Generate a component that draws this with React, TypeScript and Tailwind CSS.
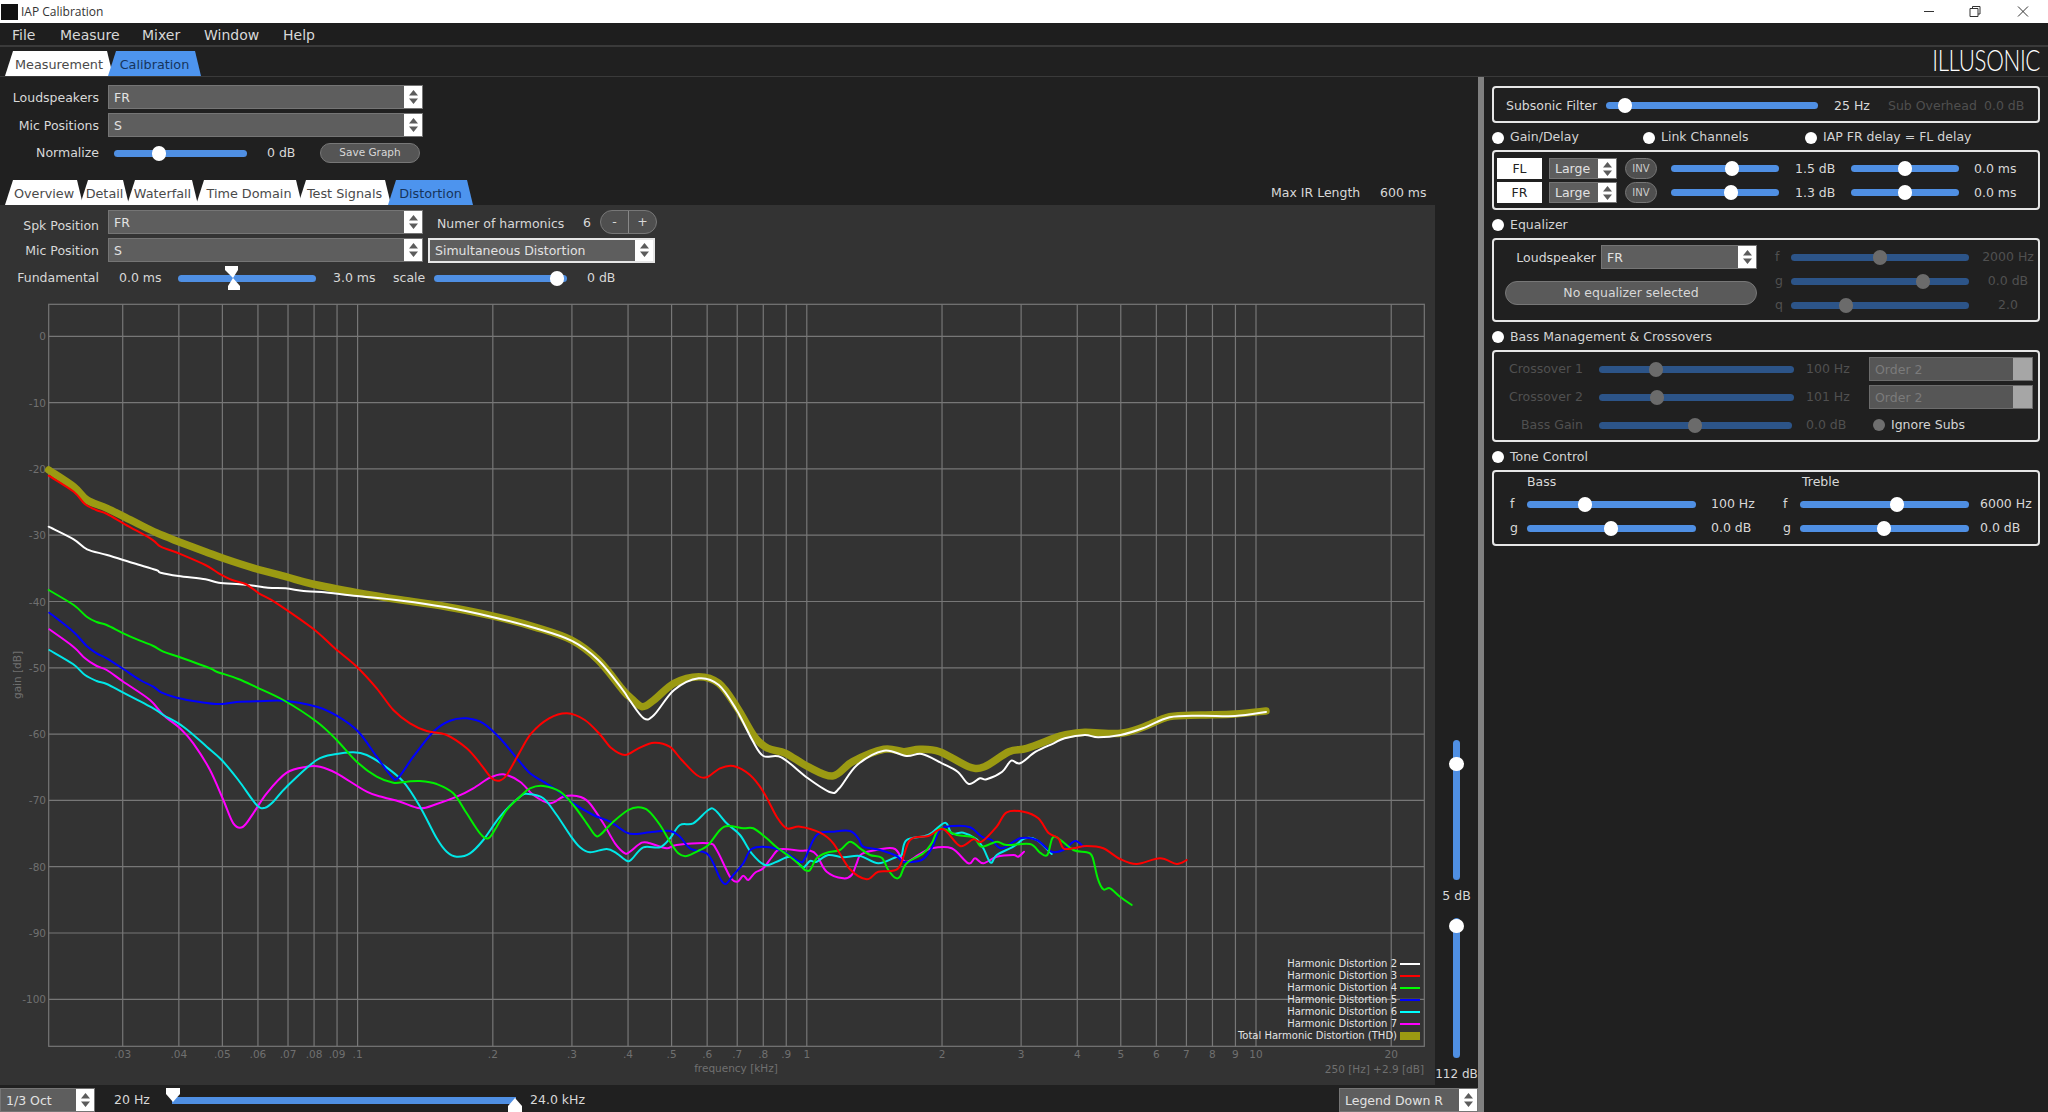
import type { ReactNode } from 'react';

type Pt = [number, number];

// traced from crops of the plot: offset + scale back to page pixels
const sec = (ox: number, oy: number, sx: number, a: number[]): Pt[] => {
  const out: Pt[] = [];
  for (let i = 0; i < a.length; i += 2) out.push([ox + a[i] / sx, oy + a[i + 1] / 3]);
  return out;
};
const z6 = (a: number[]) => sec(0, 290, 2.24, a);
const z7 = (a: number[]) => sec(500, 650, 2.24, a);
const z8 = (a: number[]) => sec(0, 600, 3, a);
const z9 = (a: number[]) => sec(500, 760, 3, a);
const z10 = (a: number[]) => sec(800, 780, 3, a);

const chain = (...parts: Pt[][]) => {
  const out: Pt[] = [];
  for (const part of parts) {
    for (const p of part) {
      if (!out.length || p[0] > out[out.length - 1][0]) out.push(p);
    }
  }
  return out;
};

const smooth = (p: Pt[]) => {
  let d = `M${p[0][0].toFixed(1)} ${p[0][1].toFixed(1)}`;
  for (let i = 0; i < p.length - 1; i++) {
    const a = p[i - 1] || p[i];
    const b = p[i];
    const c = p[i + 1];
    const e = p[i + 2] || c;
    d += `C${(b[0] + (c[0] - a[0]) / 6).toFixed(1)} ${(b[1] + (c[1] - a[1]) / 6).toFixed(1)} ${(c[0] - (e[0] - b[0]) / 6).toFixed(1)} ${(c[1] - (e[1] - b[1]) / 6).toFixed(1)} ${c[0].toFixed(1)} ${c[1].toFixed(1)}`;
  }
  return d;
};

const thd = chain(
  z6([109, 540, 165, 590, 195, 630, 240, 655, 300, 695, 350, 728, 400, 755, 460, 785, 500, 805, 570, 835, 640, 860, 700, 882, 800, 908, 900, 930, 1000, 950, 1100, 977, 1200, 1012, 1280, 1050, 1340, 1110, 1395, 1200]),
  z7([290, 140, 318, 170, 345, 150, 390, 100, 445, 80, 490, 100, 530, 170, 570, 260, 600, 295, 640, 310, 690, 350, 745, 378, 790, 335, 860, 298, 905, 305, 940, 298, 985, 305, 1050, 350, 1085, 350, 1140, 305, 1180, 295, 1240, 265, 1265, 255, 1310, 247, 1390, 250, 1440, 232, 1500, 200, 1568, 195]),
  [[1235, 714], [1266, 711]],
);
const h2 = chain(
  z6([109, 710, 165, 748, 195, 778, 240, 795, 300, 820, 350, 840, 360, 848, 400, 858, 460, 868, 490, 878, 550, 884, 600, 893, 640, 895, 680, 903, 720, 906, 800, 918, 900, 932, 1000, 952, 1100, 980, 1200, 1015, 1280, 1052, 1340, 1110, 1395, 1200]),
  z7([290, 150, 322, 205, 345, 195, 390, 120, 445, 85, 490, 105, 530, 180, 565, 270, 590, 318, 630, 322, 690, 385, 740, 427, 760, 415, 800, 345, 860, 302, 910, 318, 945, 312, 990, 340, 1025, 365, 1050, 402, 1075, 385, 1090, 388, 1125, 365, 1145, 332, 1165, 340, 1200, 305, 1240, 280, 1265, 265, 1310, 255, 1340, 262, 1390, 255, 1440, 235, 1500, 202, 1568, 197]),
  [[1235, 716], [1266, 712]],
);
const h3 = chain(
  z6([109, 557, 165, 605, 190, 642, 215, 660, 240, 672, 280, 703, 340, 748, 360, 770, 400, 790, 460, 825, 490, 850, 520, 870, 550, 882, 580, 910, 620, 940, 700, 1015, 750, 1075]),
  z8([1070, 200, 1130, 265, 1180, 330, 1230, 370, 1280, 393, 1340, 405, 1400, 445, 1440, 490, 1475, 535, 1498, 542, 1520, 525, 1560, 455]),
  z7([70, 250, 110, 205, 150, 190, 190, 210, 225, 255, 250, 295, 280, 315, 310, 295, 345, 278, 380, 290]),
  z9([545, 0, 590, 45, 620, 52, 660, 25, 700, 18, 750, 45, 790, 95, 830, 170, 860, 205]),
  z10([0, 140, 60, 158, 100, 190, 150, 268, 200, 298, 235, 275, 295, 265, 330, 180, 385, 168, 430, 148, 480, 198, 520, 178, 545, 185, 590, 140, 620, 97, 670, 95, 715, 115, 745, 158, 775, 175, 790, 205, 820, 205, 860, 198, 910, 205, 960, 237, 1010, 252, 1080, 235, 1130, 252, 1160, 240]),
);
const h4 = chain(
  z6([109, 900, 165, 945]),
  z8([260, 50, 290, 66, 320, 75, 370, 100, 420, 122, 460, 138, 490, 155, 540, 172, 630, 205, 650, 215, 715, 237, 770, 262, 850, 300, 950, 365, 1010, 420, 1070, 485, 1130, 530, 1180, 548, 1220, 545, 1260, 543, 1310, 552, 1360, 580, 1400, 640, 1440, 700, 1465, 715, 1490, 680, 1520, 630, 1560, 590]),
  z9([40, 125, 90, 85, 130, 78, 180, 95, 220, 135, 260, 190, 285, 225, 300, 225, 340, 185, 385, 150, 415, 142, 445, 152, 480, 195, 510, 245, 535, 280, 560, 288, 600, 270, 625, 255, 660, 210, 685, 198, 730, 205, 760, 205, 800, 235, 830, 262, 870, 290]),
  z10([0, 255, 15, 270, 30, 270, 50, 235, 80, 218, 120, 210, 150, 185, 180, 205, 210, 225, 245, 233, 265, 270, 285, 293, 300, 290, 320, 250, 370, 220, 395, 190, 420, 145, 470, 165, 520, 172, 545, 200, 590, 185, 620, 195, 690, 192, 720, 218, 742, 225, 757, 175, 775, 175, 820, 210, 860, 217, 877, 230, 893, 295, 910, 328, 930, 325, 960, 350, 995, 375]),
);
const h5 = chain(
  z8([148, 38, 220, 95, 260, 138, 290, 160, 320, 175, 370, 207, 420, 240, 460, 260, 485, 278, 530, 293, 600, 306, 660, 312, 720, 305, 770, 304, 850, 302, 950, 320, 1010, 347, 1075, 395, 1130, 470, 1175, 530, 1195, 533, 1240, 470, 1300, 395, 1350, 362, 1400, 355, 1450, 370, 1500, 415]),
  z9([55, 0, 90, 40, 130, 65, 170, 90, 220, 130, 280, 165, 330, 185, 380, 218, 410, 222, 450, 217, 510, 213, 540, 230, 570, 265, 620, 280, 640, 310, 660, 355, 677, 372, 700, 345, 730, 310, 755, 267, 810, 262, 860, 280]),
  z10([0, 245, 15, 235, 50, 165, 100, 155, 150, 153, 175, 175, 190, 200, 240, 210, 290, 228, 310, 245, 365, 240, 395, 205, 420, 150, 460, 138, 510, 142, 545, 170, 575, 180, 605, 205, 660, 175, 710, 180, 755, 215, 790, 210, 825, 183, 850, 200]),
);
const h6 = chain(
  z8([148, 150, 220, 193, 255, 225, 290, 243, 320, 252, 370, 278, 460, 325, 490, 345, 550, 380, 620, 440, 665, 480, 715, 540, 770, 615, 795, 623, 820, 605, 860, 560, 950, 480, 1010, 462, 1060, 457, 1100, 465, 1150, 495, 1210, 545, 1260, 620, 1310, 715, 1340, 755, 1370, 770, 1410, 760, 1450, 720, 1500, 650, 1560, 590]),
  z9([40, 120, 85, 102, 130, 115, 170, 165, 210, 225, 240, 262, 270, 277, 320, 267, 350, 280, 380, 302, 395, 298, 430, 262, 480, 262, 510, 235, 540, 195, 580, 190, 625, 150, 645, 150, 680, 190, 720, 225, 755, 280, 795, 315, 830, 305, 870, 290]),
  z10([0, 255, 12, 262, 30, 243, 50, 245, 85, 225, 130, 232, 180, 228, 235, 250, 290, 230, 305, 225, 320, 180, 385, 165, 435, 128, 455, 160, 490, 158, 530, 178, 550, 205, 572, 248, 590, 225, 640, 200, 675, 175, 710, 180, 755, 222]),
);
const h7 = chain(
  z8([148, 88, 220, 140, 255, 175, 290, 198, 320, 210, 370, 245, 450, 300, 490, 345, 540, 385, 580, 430, 630, 510, 670, 600, 700, 670, 728, 681, 760, 640, 800, 580, 860, 518, 920, 500, 960, 500, 1010, 520, 1100, 575, 1150, 592, 1200, 605, 1260, 625, 1310, 612, 1370, 590, 1420, 565, 1470, 533, 1510, 523, 1560, 545]),
  z9([60, 62, 100, 105, 150, 130, 190, 110, 230, 108, 265, 125, 310, 190, 345, 250, 375, 280, 390, 275, 425, 248, 450, 250, 500, 265, 530, 255, 625, 250, 650, 270, 690, 350, 712, 365, 730, 347, 745, 360, 765, 338, 790, 325, 815, 292, 840, 268]),
  z10([0, 212, 30, 212, 50, 225, 80, 275, 130, 295, 155, 285, 170, 250, 185, 222, 240, 208, 285, 207, 315, 245, 355, 225, 395, 205, 455, 205, 505, 250, 525, 235, 550, 250, 590, 230, 640, 225, 655, 230, 672, 215]),
);

const fx = (f: number) => 357.6 + 449.2 * Math.log10(f / 0.1);
const freqs: [number, string][] = [
  [0.03, '.03'], [0.04, '.04'], [0.05, '.05'], [0.06, '.06'], [0.07, '.07'], [0.08, '.08'], [0.09, '.09'], [0.1, '.1'],
  [0.2, '.2'], [0.3, '.3'], [0.4, '.4'], [0.5, '.5'], [0.6, '.6'], [0.7, '.7'], [0.8, '.8'], [0.9, '.9'], [1, '1'],
  [2, '2'], [3, '3'], [4, '4'], [5, '5'], [6, '6'], [7, '7'], [8, '8'], [9, '9'], [10, '10'], [20, '20'],
];
const gains = [0, -10, -20, -30, -40, -50, -60, -70, -80, -90, -100];
const gy = (g: number) => 336.3 - g * 6.63;

const legend: [string, string][] = [
  ['Harmonic Distortion 2', '#ffffff'],
  ['Harmonic Distortion 3', '#ff0000'],
  ['Harmonic Distortion 4', '#00ff00'],
  ['Harmonic Distortion 5', '#0000ff'],
  ['Harmonic Distortion 6', '#00ffff'],
  ['Harmonic Distortion 7', '#ff00ff'],
];

function Plot() {
  return (
    <svg width="1435" height="790" viewBox="0 295 1435 790" fontFamily="'DejaVu Sans', sans-serif" className="block">
      <g stroke="#777777" strokeWidth="1.2" fill="none">
        <rect x="48.7" y="304.3" width="1375.6" height="742" />
        {freqs.map(([f]) => (
          <line key={f} x1={fx(f)} x2={fx(f)} y1="304.3" y2="1046.3" />
        ))}
        {gains.map((g) => (
          <line key={g} x1="48.7" x2="1424.3" y1={gy(g)} y2={gy(g)} />
        ))}
      </g>
      <g fill="#707070" fontSize="10.5" textAnchor="middle">
        {freqs.map(([f, l]) => (
          <text key={l} x={fx(f)} y="1058">{l}</text>
        ))}
        <text x="736" y="1072">frequency [kHz]</text>
      </g>
      <g fill="#707070" fontSize="10.5" textAnchor="end">
        {gains.map((g) => (
          <text key={g} x="46" y={gy(g) + 4}>{g}</text>
        ))}
        <text x="1424" y="1073">250 [Hz]  +2.9 [dB]</text>
      </g>
      <text x="0" y="0" fill="#707070" fontSize="10.5" textAnchor="middle" transform="translate(21 675) rotate(-90)">gain [dB]</text>
      <g fill="none" strokeLinejoin="round" strokeLinecap="round">
        <path d={smooth(thd)} stroke="#9b9a12" strokeWidth="7.5" />
        <path d={smooth(h2)} stroke="#ffffff" strokeWidth="2" />
        <path d={smooth(h7)} stroke="#ff00ff" strokeWidth="2" />
        <path d={smooth(h6)} stroke="#00e8e8" strokeWidth="2" />
        <path d={smooth(h5)} stroke="#0000ff" strokeWidth="2" />
        <path d={smooth(h4)} stroke="#00f000" strokeWidth="2" />
        <path d={smooth(h3)} stroke="#ff0000" strokeWidth="2" />
      </g>
      <g fontSize="10" textAnchor="end" fill="#e4e4e4">
        {legend.map(([l, c], i) => (
          <g key={l}>
            <text x="1397" y={967 + i * 12}>{l}</text>
            <line x1="1400" x2="1420" y1={964 + i * 12} y2={964 + i * 12} stroke={c} strokeWidth="2" />
          </g>
        ))}
        <text x="1397" y="1039">Total Harmonic Distortion (THD)</text>
        <rect x="1400" y="1032" width="20" height="8" fill="#9b9a12" />
      </g>
    </svg>
  );
}

function Slider({ w, pos, off }: { w: string; pos?: number; off?: boolean }) {
  return (
    <div className={`relative h-[7px] rounded-full ${off ? 'bg-[#2c5488]' : 'bg-[#4f8fe3]'} ${w}`}>
      {pos !== undefined && (
        <div
          className={`absolute top-[-4px] h-[15px] w-[14px] rounded-full ${off ? 'bg-[#6b6b6b]' : 'bg-white'}`}
          style={{ left: pos - 7 }}
        />
      )}
    </div>
  );
}

function VSlider({ pos }: { pos: number }) {
  return (
    <div className="relative h-[140px] w-[7px] rounded-full bg-[#4f8fe3]">
      <div className="absolute left-[-4px] h-[14px] w-[15px] rounded-full bg-white" style={{ top: pos - 7 }} />
    </div>
  );
}

function Arrows() {
  return (
    <svg width="9" height="14" viewBox="0 0 9 14">
      <path d="M4.5 0 9 5.5H0zM4.5 14 0 8.5H9z" fill="#5c5c5c" />
    </svg>
  );
}

function Select({ w, h = 'h-[24px]', text, cls = '' }: { w: string; h?: string; text: string; cls?: string }) {
  return (
    <div className={`flex shrink-0 border border-[#757575] bg-[#5e5e5e] ${w} ${h} ${cls}`}>
      <div className="flex flex-1 items-center overflow-hidden whitespace-nowrap pl-[5px] pt-[2px] text-[#e2e2e2]">{text}</div>
      <div className="flex w-[18px] items-center justify-center bg-white">
        <Arrows />
      </div>
    </div>
  );
}

function OffSelect({ text }: { text: string }) {
  return (
    <div className="flex h-[24px] w-[164px] border border-[#6c6c6c] bg-[#565656]">
      <div className="flex flex-1 items-center pl-[5px] pt-[2px] text-[#7b7b7b]">{text}</div>
      <div className="w-[19px] bg-[#a6a6a6]" />
    </div>
  );
}

function Tab({ w, label, on, cls = '' }: { w: string; label: string; on?: boolean; cls?: string }) {
  return (
    <div
      className={`flex h-[25px] items-center justify-center whitespace-nowrap pt-[3px] text-[12.8px] [clip-path:polygon(8px_0,calc(100%-6px)_0,100%_100%,0_100%)] ${on ? 'bg-[#4d94ee] text-[#16345c]' : 'bg-white text-[#4a4a4a]'} ${w} ${cls}`}
    >
      {label}
    </div>
  );
}

function Radio({ label, w, off }: { label: string; w?: string; off?: boolean }) {
  return (
    <div className={`flex items-center ${w ?? ''}`}>
      <div className={`h-[12px] w-[12px] rounded-full ${off ? 'bg-[#6f6f6f]' : 'bg-white'}`} />
      <span className="ml-[6px] whitespace-nowrap text-[#d4d4d4]">{label}</span>
    </div>
  );
}

function Box({ h, children, cls = '' }: { h: string; children: ReactNode; cls?: string }) {
  return <div className={`rounded-[4px] border-2 border-[#e6e6e6] ${h} ${cls}`}>{children}</div>;
}

function GainRow({ ch, gain, pos }: { ch: string; gain: string; pos: number }) {
  return (
    <div className="flex h-[21px] items-center">
      <div className="flex h-[21px] w-[45px] items-center justify-center bg-white pt-[2px] text-[#222]">{ch}</div>
      <Select w="ml-[7px] w-[68px]" h="h-[21px]" text="Large" />
      <div className="ml-[8px] flex h-[21px] w-[32px] items-center justify-center rounded-full border border-[#777] bg-[#4f4f4f] text-[10px] text-[#ccc]">INV</div>
      <div className="ml-[14px]"><Slider w="w-[108px]" pos={pos} /></div>
      <div className="ml-[16px] w-[40px] whitespace-nowrap pt-[2px]">{gain}</div>
      <div className="ml-[16px]"><Slider w="w-[108px]" pos={54} /></div>
      <div className="ml-[15px] whitespace-nowrap pt-[2px]">0.0 ms</div>
    </div>
  );
}

function EqRow({ l, pos, v }: { l: string; pos: number; v: string }) {
  return (
    <div className="flex h-[24px] items-center text-[#505050]">
      <div className="w-[18px] pl-[2px]">{l}</div>
      <Slider w="w-[178px]" pos={pos} off />
      <div className="ml-[9px] w-[60px] text-center whitespace-nowrap">{v}</div>
    </div>
  );
}

function XoverRow({ l, pos, v, w, children }: { l: string; pos: number; v: string; w: string; children: ReactNode }) {
  return (
    <div className="flex h-[24px] items-center text-[#505050]">
      <div className="w-[89px] text-right whitespace-nowrap">{l}</div>
      <div className="ml-[16px] w-[195px]"><Slider w={w} pos={pos} off /></div>
      <div className="ml-[12px] w-[63px] whitespace-nowrap">{v}</div>
      {children}
    </div>
  );
}

function ToneRow({ l, p1, v1, p2, v2 }: { l: string; p1: number; v1: string; p2: number; v2: string }) {
  return (
    <div className="flex h-[24px] items-center">
      <div className="w-[33px] pl-[16px]">{l}</div>
      <Slider w="w-[169px]" pos={p1} />
      <div className="ml-[15px] w-[60px] whitespace-nowrap">{v1}</div>
      <div className="w-[29px] pl-[12px]">{l}</div>
      <Slider w="w-[169px]" pos={p2} />
      <div className="ml-[11px] whitespace-nowrap">{v2}</div>
    </div>
  );
}

function TopControls() {
  return (
    <div className="flex h-[103px] flex-col pt-[8px]">
      <div className="flex h-[24px] items-center">
        <div className="w-[99px] pt-[2px] text-right">Loudspeakers</div>
        <Select w="ml-[9px] w-[315px]" text="FR" />
      </div>
      <div className="mt-[4px] flex h-[24px] items-center">
        <div className="w-[99px] pt-[2px] text-right">Mic Positions</div>
        <Select w="ml-[9px] w-[315px]" text="S" />
      </div>
      <div className="mt-[6px] flex h-[20px] items-center">
        <div className="w-[99px] pt-[1px] text-right">Normalize</div>
        <div className="ml-[15px]"><Slider w="w-[133px]" pos={45} /></div>
        <div className="ml-[20px] w-[53px] pt-[1px]">0 dB</div>
        <div className="flex h-[20px] w-[100px] items-center justify-center rounded-full border border-[#777] bg-[#555] text-[10.5px]">Save Graph</div>
      </div>
    </div>
  );
}

function DistortionControls() {
  return (
    <div className="flex h-[90px] flex-col pt-[5px]">
      <div className="flex h-[24px] items-center">
        <div className="w-[99px] pt-[9px] text-right">Spk Position</div>
        <Select w="ml-[9px] w-[315px]" text="FR" />
        <div className="ml-[14px] w-[146px] pt-[4px] whitespace-nowrap">Numer of harmonics</div>
        <div className="w-[17px] pt-[2px]">6</div>
        <div className="flex h-[24px] w-[57px] rounded-full border border-[#777] bg-[#4f4f4f]">
          <div className="flex w-[28px] items-center justify-center border-r border-[#888]">-</div>
          <div className="flex flex-1 items-center justify-center">+</div>
        </div>
      </div>
      <div className="mt-[4px] flex h-[24px] items-center">
        <div className="w-[99px] pt-[2px] text-right">Mic Position</div>
        <Select w="ml-[9px] w-[315px]" text="S" />
        <Select w="ml-[5px] w-[227px]" h="h-[25px]" text="Simultaneous Distortion" cls="border-2 border-[#e6e6e6]" />
      </div>
      <div className="mt-[4px] flex h-[24px] items-center">
        <div className="w-[99px] text-right">Fundamental</div>
        <div className="ml-[20px] w-[59px]">0.0 ms</div>
        <div className="relative">
          <Slider w="w-[138px]" />
          <svg className="absolute left-[47px] top-[-9px]" width="16" height="24" viewBox="0 0 16 24">
            <path d="M0 0H13V4L8 12L15 20V24H3V20L8 12L0 4Z" fill="#fff" />
          </svg>
        </div>
        <div className="ml-[17px] w-[60px]">3.0 ms</div>
        <div className="w-[41px]">scale</div>
        <Slider w="w-[133px]" pos={123} />
        <div className="ml-[20px]">0 dB</div>
      </div>
    </div>
  );
}

function BottomBar() {
  return (
    <div className="flex h-[27px] items-center pt-[3px]">
      <Select w="w-[95px]" text="1/3 Oct" />
      <div className="ml-[19px] w-[58px]">20 Hz</div>
      <div className="relative h-[7px] w-[344px] bg-[#4f8fe3]">
        <svg className="absolute left-[-6px] top-[-9px]" width="14" height="14" viewBox="0 0 14 14">
          <path d="M0 0H14V6L7 14L0 6Z" fill="#fff" />
        </svg>
        <svg className="absolute right-[-6px] top-[1px]" width="14" height="14" viewBox="0 0 14 14">
          <path d="M7 0L14 8V14H0V8Z" fill="#fff" />
        </svg>
      </div>
      <div className="ml-[14px] flex-1">24.0 kHz</div>
      <Select w="w-[139px]" text="Legend Down R" />
    </div>
  );
}

function RightPanel() {
  return (
    <div className="flex-1 px-[8px] pt-[9px]">
      <Box h="h-[37px]" cls="flex items-center pl-[12px] pt-[2px]">
        <div className="w-[100px] whitespace-nowrap pt-[2px]">Subsonic Filter</div>
        <Slider w="w-[212px]" pos={19} />
        <div className="ml-[16px] w-[54px] pt-[2px]">25 Hz</div>
        <div className="w-[96px] whitespace-nowrap pt-[2px] text-[#4f4f4f]">Sub Overhead</div>
        <div className="whitespace-nowrap pt-[2px] text-[#4f4f4f]">0.0 dB</div>
      </Box>
      <div className="flex h-[27px] items-center pt-[2px]">
        <Radio label="Gain/Delay" w="w-[151px]" />
        <Radio label="Link Channels" w="w-[162px]" />
        <Radio label="IAP FR delay = FL delay" />
      </div>
      <Box h="h-[60px]" cls="flex flex-col gap-[3px] pl-[3px] pt-[6px]">
        <GainRow ch="FL" gain="1.5 dB" pos={61} />
        <GainRow ch="FR" gain="1.3 dB" pos={60} />
      </Box>
      <div className="flex h-[28px] items-center pt-[2px]">
        <Radio label="Equalizer" />
      </div>
      <Box h="h-[84px]" cls="flex pt-[5px]">
        <div className="w-[263px]">
          <div className="flex h-[24px] items-center">
            <div className="w-[102px] pt-[2px] text-right">Loudspeaker</div>
            <Select w="ml-[5px] w-[156px]" text="FR" />
          </div>
          <div className="ml-[11px] mt-[12px] flex h-[24px] w-[252px] items-center justify-center rounded-full border border-[#777] bg-[#5a5a5a]">No equalizer selected</div>
        </div>
        <div className="ml-[16px]">
          <EqRow l="f" pos={89} v="2000 Hz" />
          <EqRow l="g" pos={132} v="0.0 dB" />
          <EqRow l="q" pos={55} v="2.0" />
        </div>
      </Box>
      <div className="flex h-[28px] items-center pt-[2px]">
        <Radio label="Bass Management & Crossovers" />
      </div>
      <Box h="h-[92px]" cls="flex flex-col gap-[4px] pt-[5px]">
        <XoverRow l="Crossover 1" pos={57} v="100 Hz" w="w-[195px]"><OffSelect text="Order 2" /></XoverRow>
        <XoverRow l="Crossover 2" pos={58} v="101 Hz" w="w-[195px]"><OffSelect text="Order 2" /></XoverRow>
        <XoverRow l="Bass Gain" pos={96} v="0.0 dB" w="w-[193px]">
          <div className="ml-[4px]"><Radio label="Ignore Subs" off /></div>
        </XoverRow>
      </Box>
      <div className="flex h-[28px] items-center pt-[2px]">
        <Radio label="Tone Control" />
      </div>
      <Box h="h-[76px]" cls="pt-[1px]">
        <div className="flex h-[19px] items-center">
          <div className="ml-[33px] w-[275px]">Bass</div>
          <div>Treble</div>
        </div>
        <ToneRow l="f" p1={58} v1="100 Hz" p2={97} v2="6000 Hz" />
        <ToneRow l="g" p1={84} v1="0.0 dB" p2={84} v2="0.0 dB" />
      </Box>
    </div>
  );
}

export default function App() {
  return (
    <div className="flex h-[1112px] w-[2048px] flex-col overflow-hidden bg-[#202020] font-['DejaVu_Sans',sans-serif] text-[12.5px] text-[#d8d8d8]">
      <div className="flex h-[23px] items-center bg-white">
        <div className="ml-[1px] h-[16px] w-[17px] bg-[#111]" />
        <div className="ml-[3px] flex-1 font-['Open_Sans',sans-serif] text-[12px] text-[#333]">IAP Calibration</div>
        <svg width="120" height="23" viewBox="0 0 120 23" fill="none" stroke="#333" strokeWidth="1">
          <path d="M0 11.5H10" />
          <path d="M46 8.5H54V16.5H46ZM48.5 8.5V6.5H56V14H54" />
          <path d="M94 6.5L104 16.5M104 6.5L94 16.5" />
        </svg>
        <div className="w-[4px]" />
      </div>
      <div className="flex h-[24px] items-center border-b-2 border-[#3a3a3a] bg-[#1e1e1e] pl-[12px] pt-[2px] text-[14px]">
        <div className="w-[48px]">File</div>
        <div className="w-[82px]">Measure</div>
        <div className="w-[62px]">Mixer</div>
        <div className="w-[79px]">Window</div>
        <div>Help</div>
      </div>
      <div className="flex h-[30px] items-end justify-between border-b border-[#3a3a3a] pl-[5px] pr-[8px]">
        <div className="flex">
          <Tab w="w-[108px]" label="Measurement" />
          <Tab w="w-[93px]" label="Calibration" on cls="ml-[-5px]" />
        </div>
        <div className="mb-[3px] origin-right scale-x-[.77] font-['Lato',sans-serif] text-[29px] leading-[26px] font-light tracking-[-0.5px] text-white">ILLUSONIC</div>
      </div>
      <div className="flex flex-1">
        <div className="flex w-[1478px] flex-col">
          <TopControls />
          <div className="flex h-[25px] items-end pl-[5px]">
            <Tab w="w-[78px]" label="Overview" />
            <Tab w="w-[49px]" label="Detail" cls="ml-[-3px]" />
            <Tab w="w-[71px]" label="Waterfall" cls="ml-[-2px]" />
            <Tab w="w-[106px]" label="Time Domain" cls="ml-[-2px]" />
            <Tab w="w-[93px]" label="Test Signals" cls="ml-[-4px]" />
            <Tab w="w-[85px]" label="Distortion" on cls="ml-[-3px]" />
            <div className="ml-[798px] w-[109px] pb-[2px] whitespace-nowrap">Max IR Length</div>
            <div className="pb-[2px] whitespace-nowrap">600 ms</div>
          </div>
          <div className="flex h-[880px]">
            <div className="w-[1435px] bg-[#333333]">
              <DistortionControls />
              <Plot />
            </div>
            <div className="flex flex-1 flex-col items-center pt-[535px]">
              <VSlider pos={24} />
              <div className="mt-[7px] h-[31px] whitespace-nowrap">5 dB</div>
              <VSlider pos={8} />
              <div className="mt-[7px] whitespace-nowrap text-[12px]">112 dB</div>
            </div>
          </div>
          <BottomBar />
        </div>
        <div className="w-[6px] bg-[#808080]" />
        <RightPanel />
      </div>
    </div>
  );
}
